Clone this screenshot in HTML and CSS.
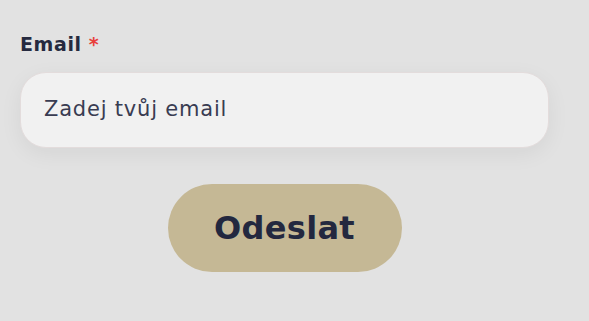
FILE: index.html
```
<!DOCTYPE html>
<html lang="cs">
<head>
<meta charset="utf-8">
<link rel="stylesheet" href="styles.css">
</head>
<body>
<form class="form">
  <label class="label" for="email">Email <span class="req">*</span></label>
  <input class="input" id="email" type="email" placeholder="Zadej tvůj email">
  <div class="actions">
    <button class="btn" type="button">Odeslat</button>
  </div>
</form>
</body>
</html>
```
FILE: styles.css
```
html, body {
  margin: 0;
  padding: 0;
  background: #e2e2e2;
}
body {
  font-family: "DejaVu Sans", sans-serif;
  width: 589px;
  height: 321px;
  overflow: hidden;
}
.form {
  display: flex;
  flex-direction: column;
  padding: 32px 40px 0 20px;
}
.label {
  font-size: 19px;
  font-weight: 700;
  color: #262a40;
  line-height: 24px;
  letter-spacing: 0.6px;
}
.req {
  color: #e8403c;
}
.input {
  margin-top: 16px;
  height: 76px;
  box-sizing: border-box;
  width: 529px;
  border: 1px solid #e3dcdc;
  border-radius: 26px;
  background: #f1f1f1;
  padding: 0 23px 3px;
  font-family: inherit;
  font-size: 21px;
  letter-spacing: 0.8px;
  color: #393c52;
  box-shadow: 0 6px 22px rgba(0,0,0,0.06);
  outline: none;
}
.input::placeholder {
  color: #393c52;
  opacity: 1;
}
.actions {
  display: flex;
  justify-content: center;
  width: 529px;
  margin-top: 36px;
}
.btn {
  width: 234px;
  height: 88px;
  border: none;
  border-radius: 44px;
  background: #c5b895;
  color: #23283f;
  font-family: inherit;
  font-size: 32px;
  font-weight: 700;
  letter-spacing: 0.3px;
  padding-bottom: 2px;
  cursor: pointer;
}
```
